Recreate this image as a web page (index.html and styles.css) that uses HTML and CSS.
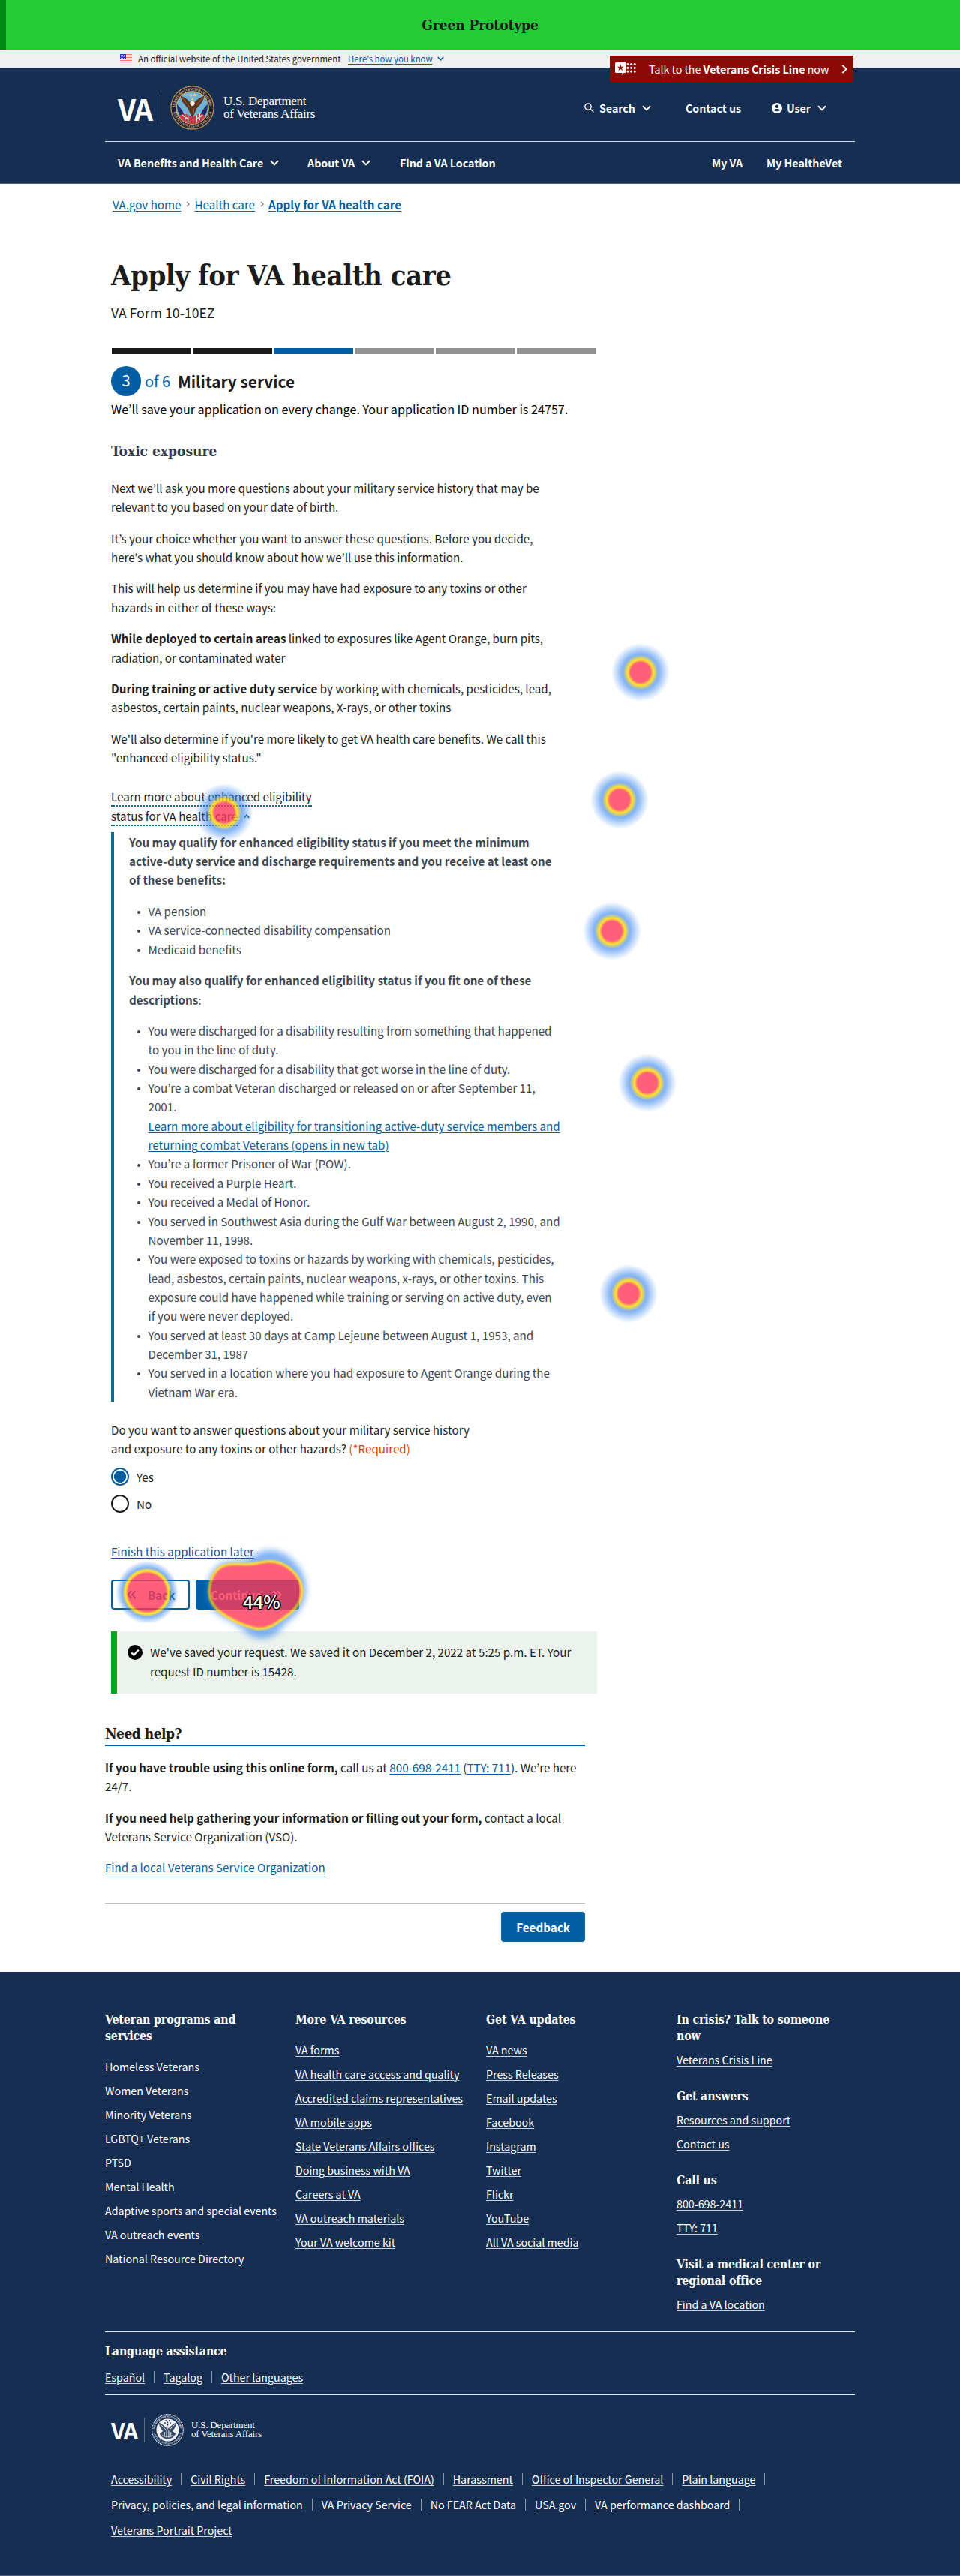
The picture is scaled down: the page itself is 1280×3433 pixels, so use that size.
FILE: index.html
```html
<!DOCTYPE html>
<html lang="en">
<head>
<meta charset="utf-8">
<title>Apply for VA health care</title>
<link rel="stylesheet" href="styles.css">
</head>
<body>
<svg class="defs" width="0" height="0" aria-hidden="true">
  <defs>
    <symbol id="down" viewBox="0 0 12 8"><path d="M1 1.2 6 6.4 11 1.2" fill="none" stroke="currentColor" stroke-width="2"/></symbol>
    <symbol id="right" viewBox="0 0 8 12"><path d="M1.5 1 6.5 6 1.5 11" fill="none" stroke="currentColor" stroke-width="2"/></symbol>
    <symbol id="double" viewBox="0 0 13 12"><path d="M1.5 1 6 6 1.5 11M7 1l4.500 5L7 11" fill="none" stroke="currentColor" stroke-width="2"/></symbol>
    <path id="ring-top" d="M6.500 30a23.500 23.500 0 0 1 47 0"/>
    <path id="ring-bottom" d="M3.200 30a26.800 26.800 0 0 0 53.600 0"/>
  </defs>
</svg>

<div class="proto">Green Prototype</div>
<div class="gov">
  <svg class="flag" width="16" height="12" viewBox="0 0 16 12"><path fill="#fff0ee" d="M0 0h16v12H0z"/><path stroke="#f5766a" stroke-width="1" d="M0 .5h16M0 2.500h16M0 4.500h16M0 6.500h16M0 8.500h16M0 10.500h16"/><path fill="#3232b4" d="M0 0h8v7H0z"/><path stroke="#b8b8f0" stroke-dasharray="1 1" d="M1 1.500h6M1.500 3.500h5M1 5.500h6"/></svg>
  <span class="gov-text">An official website of the United States government</span>
  <a class="gov-link">Here’s how you know</a>
  <svg class="gov-chev" width="9" height="6"><use href="#down"/></svg>
</div>

<header class="header">
  <div class="crisis">
    <svg width="29" height="18" viewBox="0 0 29 18"><path fill="#fff" d="M0 1.500Q0 0 1.500 0H14v14h-2.500L9.500 17.500V14h-8Q0 14 0 12.500z"/><path fill="#8b0a03" d="m7.200 2.600 1.100 3.200h3.300L9 7.800l1 3.300-2.800-2-2.800 2 1-3.300-2.600-2h3.300z"/><g stroke="#fff" stroke-width="3.200" stroke-linecap="round" stroke-dasharray="0 4.600"><path d="M17 2.500h10M17 7.300h10M17 12.100h10"/></g></svg>
    <span class="crisis-text">Talk to the <b>Veterans Crisis Line</b> now</span>
    <svg width="8" height="12"><use href="#right"/></svg>
  </div>
  <div class="head-in">
    <div class="head-top">
      <div class="va">VA</div>
      <div class="va-div"></div>
      <svg class="seal" width="59" height="59" viewBox="0 0 60 60">
        <circle cx="30" cy="30" r="29" fill="#1c1f3d" stroke="#a98a4e" stroke-width="1.500"/>
        <circle cx="30" cy="30" r="27.600" fill="none" stroke="#3a2130" stroke-width="1"/>
        <g font-family="Liberation Serif, serif" font-size="5" font-weight="bold" fill="#c9b277"><text textLength="70"><textPath href="#ring-top" startOffset="1">DEPARTMENT OF VETERANS AFFAIRS</textPath></text><text textLength="72"><textPath href="#ring-bottom" startOffset="6">UNITED STATES OF AMERICA</textPath></text></g>
        <circle cx="30" cy="30" r="22.200" fill="#6fb2d6" stroke="#c9a557" stroke-width="1.200"/>
        <path fill="#232b63" d="M9.500 25c3 5 7 7 9 14l3 8C13 43 8.500 36 9.500 25zM50.500 25c-3 5-7 7-9 14l-3 8c8.500-4 13-11 12-22z"/>
        <path fill="#c63a4b" d="M12 41c7-5 12-3 18 3 6-6 11-8 18-3-4 7-10 11-18 11S16 48 12 41z"/>
        <path stroke="#f3e9e4" stroke-width="1.300" fill="none" d="M20 37v10M24 40v10M36 40v10M40 37v10M16 40l8 5M44 40l-8 5"/>
        <path fill="#5b3420" d="M30 25c-4-2-6-8-16-11 1 8 5 11 10 17l3 7 3 6 3-6 3-7c5-6 9-9 10-17-10 3-12 9-16 11z"/>
        <path stroke="#8a5b3a" fill="none" d="M16 16c4 6 8 8 10 14M44 16c-4 6-8 8-10 14M28 31v7M32 31v7"/>
        <path fill="#f4ead8" d="M26.500 24c1-4 6-4 7 0l-2 3.500h-3z"/>
        <path fill="#e9cf66" d="m27 10 1 2 2-1-1 2 2 1h-2l-1 2-1-2h-2l2-1zM33 10l1 2h2l-2 1 1 2-2-1-2 1 1-2-2-1h2zM30 16l1 2h2l-2 1-1 2-1-2h-2l2-1z"/>
      </svg>
      <div class="dept">U.S. Department<br>of Veterans Affairs</div>
      <div class="tools">
        <span class="tool t-search"><svg class="i-search" width="13" height="13" viewBox="0 0 13 13" fill="none" stroke="#fff" stroke-width="1.300"><circle cx="5" cy="5" r="4.200"/><path d="m8 8 4.400 4.400"/></svg>Search<svg class="chev" width="12" height="8"><use href="#down"/></svg></span>
        <span class="tool t-contact">Contact us</span>
        <span class="tool"><svg class="i-user" width="14" height="14" viewBox="0 0 14 14"><circle cx="7" cy="7" r="7" fill="#fff"/><circle cx="7" cy="4.800" r="2.200" fill="#162e51"/><path fill="#162e51" d="M2.800 9.600C4 7.600 10 7.600 11.200 9.600 10 11.800 4 11.800 2.800 9.600z"/></svg>User<svg class="chev" width="12" height="8"><use href="#down"/></svg></span>
      </div>
    </div>
    <nav class="menu">
      <span class="m1">VA Benefits and Health Care<svg class="chev" width="12" height="8"><use href="#down"/></svg></span>
      <span class="m2">About VA<svg class="chev" width="12" height="8"><use href="#down"/></svg></span>
      <span>Find a VA Location</span>
      <span class="m4">My VA</span>
      <span class="m5">My HealtheVet</span>
    </nav>
  </div>
</header>

<main class="main">
  <nav class="crumbs"><a>VA.gov home</a><svg width="5" height="8" viewBox="0 0 8 12"><use href="#right"/></svg><a>Health care</a><svg width="5" height="8" viewBox="0 0 8 12"><use href="#right"/></svg><a><b>Apply for VA health care</b></a></nav>
  <h1>Apply for VA health care</h1>
  <p class="form-no">VA Form 10-10EZ</p>
  <div class="progress"><i class="done"></i><i class="done"></i><i class="now"></i><i></i><i></i><i></i></div>
  <div class="step"><span class="num">3</span><span class="of">of 6</span><b>Military service</b></div>
  <p class="save">We’ll save your application on every change. Your application ID number is 24757.</p>
  <h2 class="toxic">Toxic exposure</h2>
  <p>Next we’ll ask you more questions about your military service history that may be<br>relevant to you based on your date of birth.</p>
  <p>It’s your choice whether you want to answer these questions. Before you decide,<br>here’s what you should know about how we’ll use this information.</p>
  <p>This will help us determine if you may have had exposure to any toxins or other<br>hazards in either of these ways:</p>
  <p><b>While deployed to certain areas</b> linked to exposures like Agent Orange, burn pits,<br>radiation, or contaminated water</p>
  <p><b>During training or active duty service</b> by working with chemicals, pesticides, lead,<br>asbestos, certain paints, nuclear weapons, X-rays, or other toxins</p>
  <p>We'll also determine if you're more likely to get VA health care benefits. We call this<br>"enhanced eligibility status."</p>
  <div class="learn"><span>Learn more about enhanced eligibility<br>status for VA health care</span><svg width="8" height="6" viewBox="0 0 8 6"><path d="M.7 5 4 1.200 7.300 5" fill="none" stroke="#005ea2" stroke-width="1.500"/></svg></div>
  <div class="info">
    <p><b>You may qualify for enhanced eligibility status if you meet the minimum<br>active-duty service and discharge requirements and you receive at least one<br>of these benefits:</b></p>
    <ul>
      <li>VA pension</li>
      <li>VA service-connected disability compensation</li>
      <li>Medicaid benefits</li>
    </ul>
    <p><b>You may also qualify for enhanced eligibility status if you fit one of these<br>descriptions</b>:</p>
    <ul>
      <li>You were discharged for a disability resulting from something that happened<br>to you in the line of duty.</li>
      <li>You were discharged for a disability that got worse in the line of duty.</li>
      <li>You’re a combat Veteran discharged or released on or after September 11,<br>2001.<br><a>Learn more about eligibility for transitioning active-duty service members and<br>returning combat Veterans (opens in new tab)</a></li>
      <li>You’re a former Prisoner of War (POW).</li>
      <li>You received a Purple Heart.</li>
      <li>You received a Medal of Honor.</li>
      <li>You served in Southwest Asia during the Gulf War between August 2, 1990, and<br>November 11, 1998.</li>
      <li>You were exposed to toxins or hazards by working with chemicals, pesticides,<br>lead, asbestos, certain paints, nuclear weapons, x-rays, or other toxins. This<br>exposure could have happened while training or serving on active duty, even<br>if you were never deployed.</li>
      <li>You served at least 30 days at Camp Lejeune between August 1, 1953, and<br>December 31, 1987</li>
      <li>You served in a location where you had exposure to Agent Orange during the<br>Vietnam War era.</li>
    </ul>
  </div>
  <p class="question">Do you want to answer questions about your military service history<br>and exposure to any toxins or other hazards? <span class="req">(*Required)</span></p>
  <div class="radios">
    <label><i class="dot on"></i>Yes</label>
    <label><i class="dot"></i>No</label>
  </div>
  <a class="finish">Finish this application later</a>
  <div class="buttons">
    <button class="btn back"><svg width="13" height="12"><use href="#double" transform="rotate(180 6.500 6)"/></svg>Back</button>
    <button class="btn cont">Continue<svg width="13" height="12"><use href="#double"/></svg></button>
  </div>
  <div class="alert">
    <svg width="20" height="20" viewBox="0 0 20 20"><circle cx="10" cy="10" r="10"/><path d="m5.200 10.400 3.200 3.200 6.400-7" fill="none" stroke="#ecf3ec" stroke-width="2.400"/></svg>
    <span>We've saved your request. We saved it on December 2, 2022 at 5:25 p.m. ET. Your<br>request ID number is 15428.</span>
  </div>
  <section class="help">
    <h2>Need help?</h2>
    <p><b>If you have trouble using this online form,</b> call us at <a>800-698-2411</a> (<a>TTY: 711</a>). We’re here<br>24/7.</p>
    <p><b>If you need help gathering your information or filling out your form,</b> contact a local<br>Veterans Service Organization (VSO).</p>
    <p><a>Find a local Veterans Service Organization</a></p>
    <div class="fb"><button class="btn feedback">Feedback</button></div>
  </section>
</main>

<footer class="footer">
  <div class="foot-in">
    <div class="cols">
      <div>
        <h3>Veteran programs and<br>services</h3>
        <ul><li><a>Homeless Veterans</a></li><li><a>Women Veterans</a></li><li><a>Minority Veterans</a></li><li><a>LGBTQ+ Veterans</a></li><li><a>PTSD</a></li><li><a>Mental Health</a></li><li><a>Adaptive sports and special events</a></li><li><a>VA outreach events</a></li><li><a>National Resource Directory</a></li></ul>
      </div>
      <div>
        <h3>More VA resources</h3>
        <ul><li><a>VA forms</a></li><li><a>VA health care access and quality</a></li><li><a>Accredited claims representatives</a></li><li><a>VA mobile apps</a></li><li><a>State Veterans Affairs offices</a></li><li><a>Doing business with VA</a></li><li><a>Careers at VA</a></li><li><a>VA outreach materials</a></li><li><a>Your VA welcome kit</a></li></ul>
      </div>
      <div>
        <h3>Get VA updates</h3>
        <ul><li><a>VA news</a></li><li><a>Press Releases</a></li><li><a>Email updates</a></li><li><a>Facebook</a></li><li><a>Instagram</a></li><li><a>Twitter</a></li><li><a>Flickr</a></li><li><a>YouTube</a></li><li><a>All VA social media</a></li></ul>
      </div>
      <div class="contact">
        <h3>In crisis? Talk to someone<br>now</h3>
        <ul><li><a>Veterans Crisis Line</a></li></ul>
        <h3>Get answers</h3>
        <ul><li><a>Resources and support</a></li><li><a>Contact us</a></li></ul>
        <h3>Call us</h3>
        <ul><li><a>800-698-2411</a></li><li><a>TTY: 711</a></li></ul>
        <h3>Visit a medical center or<br>regional office</h3>
        <ul><li><a>Find a VA location</a></li></ul>
      </div>
    </div>
    <div class="lang">
      <h3>Language assistance</h3>
      <div class="row"><a>Español</a><i></i><a>Tagalog</a><i></i><a>Other languages</a></div>
    </div>
    <div class="foot-logo">
      <div class="va small">VA</div>
      <div class="va-div"></div>
      <svg class="seal" width="43" height="43" viewBox="0 0 60 60">
        <circle cx="30" cy="30" r="29" fill="none" stroke="#e6eaf0" stroke-width="1.600" stroke-dasharray="2 .8"/>
        <g font-family="Liberation Serif, serif" font-size="5.200" font-weight="bold" fill="#d5dbe4"><text textLength="70"><textPath href="#ring-top" startOffset="1">DEPARTMENT OF VETERANS AFFAIRS</textPath></text><text textLength="72"><textPath href="#ring-bottom" startOffset="6">UNITED STATES OF AMERICA</textPath></text></g>
        <circle cx="30" cy="30" r="21" fill="#f2f4f7"/>
        <path fill="#3a4d6b" d="M14 16c8 4 11 8 16 12 5-4 8-8 16-12 0 7-3 11-7 16l6 5c-3 6-9 10-15 10s-12-4-15-10l6-5c-4-5-7-9-7-16z"/>
        <path fill="none" stroke="#f2f4f7" stroke-width="1.300" d="M17 20l10 10M43 20 33 30M24 34v9M28 31v13M32 31v13M36 34v9M20 40c6 3 14 3 20 0"/>
        <g fill="#162e51"><circle cx="27" cy="12.500" r="1.200"/><circle cx="33" cy="12.500" r="1.200"/><circle cx="25" cy="17" r="1.200"/><circle cx="30" cy="16" r="1.200"/><circle cx="35" cy="17" r="1.200"/><circle cx="30" cy="20.500" r="1.200"/></g>
      </svg>
      <div class="dept">U.S. Department<br>of Veterans Affairs</div>
    </div>
    <div class="legal">
      <div class="row"><a>Accessibility</a><i></i><a>Civil Rights</a><i></i><a>Freedom of Information Act (FOIA)</a><i></i><a>Harassment</a><i></i><a>Office of Inspector General</a><i></i><a>Plain language</a><i></i></div>
      <div class="row"><a>Privacy, policies, and legal information</a><i></i><a>VA Privacy Service</a><i></i><a>No FEAR Act Data</a><i></i><a>USA.gov</a><i></i><a>VA performance dashboard</a><i></i></div>
      <div class="row"><a>Veterans Portrait Project</a></div>
    </div>
  </div>
</footer>

<!-- Click heat map -->
<div class="heat">
  <i class="spot" style="left:299px;top:1083px"></i>
  <i class="spot" style="left:854px;top:896px"></i>
  <i class="spot" style="left:826px;top:1066px"></i>
  <i class="spot" style="left:816px;top:1241px"></i>
  <i class="spot" style="left:863px;top:1443px"></i>
  <i class="spot" style="left:838px;top:1724px"></i>
  <i class="spot big" style="left:196px;top:2122px"></i>
  <svg class="blob" width="170" height="150" viewBox="260 2050 170 150">
    <defs>
      <filter id="b1" x="-20%" y="-20%" width="140%" height="140%"><feGaussianBlur stdDeviation="4"/></filter>
      <filter id="b2"><feGaussianBlur stdDeviation="1.200"/></filter>
      <filter id="b3"><feGaussianBlur stdDeviation="1"/></filter>
      <path id="blob-core" d="M281 2121C281 2104 290 2089 303 2087C314 2085 322 2087 334 2086C346 2085 354 2081 366 2083C387 2087 401 2105 401 2120C401 2140 384 2150 370 2160C358 2169 345 2171 333 2166C322 2163 310 2157 301 2151C289 2144 281 2134 281 2121Z"/>
    </defs>
    <g opacity=".8">
      <path filter="url(#b1)" fill="#2d7fee" opacity=".75" d="M276 2122C276 2101 288 2082 304 2081C322 2081 334 2078 342 2071C352 2063 373 2065 386 2075C400 2086 410 2103 408 2122C406 2143 392 2155 378 2166C370 2182 348 2189 333 2179C324 2172 314 2163 303 2158C284 2149 276 2138 276 2122Z"/>
      <use href="#blob-core" filter="url(#b2)" fill="#ffd400" stroke="#ffd400" stroke-width="7"/>
      <use href="#blob-core" filter="url(#b3)" fill="#ff3758"/>
    </g>
  </svg>
  <span class="pct">44%</span>
</div>
</body>
</html>
```

FILE: styles.css
```css
* { box-sizing: border-box; }
body {
  position: relative;
  margin: 0;
  width: 1280px;
  height: 3433px;
  overflow: hidden;
  background: #fff;
  color: #1b1b1b;
  font: 15.16px/25.34px "Noto Sans CJK KR", sans-serif;
  white-space: nowrap;
}
h1, h2, h3, p, ul { margin: 0; padding: 0; }
h1, h2, h3, .proto {
  font-family: "DejaVu Serif Condensed", "DejaVu Serif", serif;
  font-stretch: condensed;
  font-weight: 700;
}
ul { list-style: none; }
svg { display: block; flex: none; }
i { display: block; font-style: normal; }
a { color: #005ea2; text-decoration: underline; text-decoration-thickness: 1px; text-underline-offset: 2px; }
.defs { position: absolute; }

.proto {
  height: 66px;
  border-left: 8px solid #008817;
  padding-right: 8px;
  background: #23cb35;
  text-align: center;
  font-size: 19px;
  line-height: 66px;
  letter-spacing: -.1px;
}
.gov {
  display: flex;
  align-items: center;
  height: 24px;
  padding-left: 160px;
  background: #f0f0f0;
  font-size: 11.42px;
  line-height: 24px;
}
.gov-text { margin-left: 8px; width: 280px; }
.gov-link { width: 119px; }
.gov-chev { color: #005ea2; }

.header {
  position: relative;
  height: 155px;
  background: #162e51;
  border-bottom: 1px solid #4c5f7d;
  color: #fff;
  font-weight: 700;
  font-size: 14.25px;
}
.crisis {
  position: absolute;
  left: 813px;
  top: -16px;
  width: 325px;
  height: 36px;
  display: flex;
  align-items: center;
  padding-left: 7px;
  background: #8b0a03;
  border-radius: 0 0 4px 4px;
  font-weight: 400;
}
.crisis-text { width: 273px; padding-left: 16px; }
.head-in { width: 1000px; margin-left: 140px; }
.head-top {
  display: flex;
  align-items: center;
  height: 99px;
  padding: 9px 0 0 17px;
  border-bottom: 1px solid #d4d8de;
}
.va { width: 57px; font-weight: 700; font-size: 39px; line-height: 44px; letter-spacing: -1.500px; }
.va-div { width: 1px; height: 43px; background: #8693a8; }
.seal { margin-left: 12px; }
.dept { margin-left: 12px; font: 400 17px/16.500px "Liberation Serif", serif; letter-spacing: -.3px; }
.tools { display: flex; margin-left: auto; padding-right: 38px; }
.tool { display: flex; align-items: center; }
.t-search { width: 135px; }
.t-contact { width: 115px; }
.i-search { margin-right: 7px; }
.i-user { margin-right: 6px; }
.chev { margin-left: 9px; }
.menu { display: flex; align-items: center; height: 56px; padding: 0 17px 0 17px; }
.menu span { display: flex; align-items: center; }
.m1 { width: 253px; }
.m2 { width: 123px; }
.m4 { margin-left: auto; width: 73px; }

.main { width: 648px; margin-left: 148px; padding-top: 14.400px; }
.main > p + p { margin-top: 16.200px; }
.crumbs { display: flex; align-items: center; height: 26px; padding-left: 2px; }
.crumbs svg { margin: 0 6px 0 7px; color: #757575; }
h1 { margin-top: 59.900px; font-size: 38px; line-height: 44px; letter-spacing: -.5px; }
.form-no { margin-top: 13.700px; font-size: 17.700px; line-height: 26px; }
.progress { display: flex; gap: 2px; margin: 35px 0 0 1px; }
.progress i { width: 106px; height: 8px; background: #919191; }
.progress .done { background: #1b1b1b; }
.progress .now { background: #005ea2; }
.step { display: flex; align-items: center; height: 40px; margin-top: 15.700px; font-size: 20px; line-height: 38px; }
.step b { font-size: 20.800px; }
.num { width: 40px; height: 40px; border-radius: 50%; background: #005ea2; color: #fff; text-align: center; }
.of { width: 44px; margin-left: 5px; color: #005ea2; }
.save { margin-top: 4.300px; font-size: 16.150px; line-height: 26px; color: #000; }
.toxic { margin: 30.700px 0 25px; font-size: 19px; line-height: 24px; color: #323a45; }
.learn { width: 300px; margin-top: 25px; line-height: 26px; }
.learn span { border-bottom: 2px dotted #046b99; padding-bottom: 1px; }
.learn svg { display: inline-block; margin-left: 8px; vertical-align: 3px; }
.info { height: 759px; margin-top: 9.300px; padding: .75px 0 0 20px; border-left: 4px solid #046b99; color: #3d4551; }
.info ul { margin: 16.100px 0 16.400px; }
.info li { position: relative; padding-left: 25.500px; }
.info li::before { content: ""; position: absolute; left: 10.500px; top: 12.200px; width: 4px; height: 4px; border-radius: 50%; background: #3d4551; }
.question { margin-top: 25px; }
.req { color: #d54309; }
.radios { display: grid; gap: 12px; margin-top: 12px; }
.radios label { display: flex; align-items: center; gap: 10px; height: 24px; line-height: 22px; }
.dot { width: 24px; height: 24px; border: 2px solid #1b1b1b; border-radius: 50%; }
.dot.on { border-color: #005ea2; background: radial-gradient(circle, #005ea2 7.600px, #fff 8.400px); }
.finish { display: block; margin-top: 39px; color: #1f4a8c; }
.buttons { display: flex; gap: 8px; margin-top: 25px; }
.btn { display: flex; align-items: center; height: 40px; margin: 0; padding: 0; border: 0; border-radius: 4px; background: #005ea2; color: #fff; font: 700 15.160px/38px "Noto Sans CJK KR", sans-serif; }
.back { width: 105px; padding-left: 19px; gap: 15px; border: 2px solid #005ea2; background: #fff; color: #005ea2; }
.cont { width: 138px; padding-left: 20px; gap: 14px; }
.alert { display: flex; height: 83px; margin-top: 29px; padding: 15.400px 0 0 14px; border-left: 8px solid #00a91c; background: #ecf3ec; }
.alert svg { margin: 2.500px 10px 0 0; }
.help { width: 640px; margin: 41px 0 0 -8px; }
.help h2 { padding-bottom: 3px; border-bottom: 2px solid #005ea2; font-size: 19px; line-height: 24px; letter-spacing: -.5px; }
.help p { margin-top: 15.900px; }
.fb { display: flex; justify-content: flex-end; margin-top: 34.600px; padding-top: 11px; border-top: 1px solid #bcbcbc; }
.feedback { width: 112px; justify-content: center; }

.footer { height: 805px; margin-top: 39.500px; padding-top: 53.500px; background: #162e51; color: #fff; font-size: 14.260px; line-height: 32px; border-bottom: 1px solid #4c5f7d; }
.footer a { color: #fff; text-decoration-color: #c9d0da; }
.foot-in { width: 1000px; margin-left: 140px; }
.footer h3 { font-size: 15.800px; line-height: 22px; letter-spacing: -.15px; }
.cols { display: grid; grid-template-columns: repeat(4, 254px); height: 425.500px; }
.cols ul { margin-top: 12.600px; }
.cols .contact ul { margin: 4.300px 0 21.600px; }
.lang { height: 85px; padding-top: 15.500px; border: solid #e6eaf0; border-width: 1px 0; }
.lang .row { margin-top: 7px; }
.row { display: flex; align-items: center; }
.row i { width: 1px; height: 16px; margin: 0 12px; background: #8a97aa; }
.foot-logo { display: flex; align-items: center; height: 43px; margin: 25px 0 0 8px; }
.va.small { width: 44px; font-size: 30px; letter-spacing: -1.200px; line-height: 40px; }
.foot-logo .va-div { height: 33px; background: #5c6c86; }
.foot-logo .seal { margin-left: 9px; }
.foot-logo .dept { margin-left: 10px; font-size: 13px; line-height: 12.500px; letter-spacing: -.2px; }
.legal { margin: 27.800px 0 0 8px; line-height: 34px; }

.heat { position: absolute; left: 0; top: 0; }
.spot {
  position: absolute;
  width: 78px;
  height: 78px;
  margin: -39px 0 0 -39px;
  border-radius: 50%;
  background: radial-gradient(circle closest-side, rgba(255,55,88,.8) 0 34%, rgba(255,212,0,.8) 43% 45%, rgba(45,127,238,.6) 60%, rgba(45,127,238,.5) 68%, rgba(45,127,238,.24) 84%, rgba(45,127,238,0));
}
.spot.big {
  width: 84px;
  height: 84px;
  margin: -42px 0 0 -42px;
  background: radial-gradient(circle closest-side, rgba(255,55,88,.8) 0 60%, rgba(255,212,0,.8) 67% 70%, rgba(45,127,238,.6) 78%, rgba(45,127,238,0));
}
.blob { position: absolute; left: 260px; top: 2050px; }
.pct {
  position: absolute;
  left: 324px;
  top: 2118px;
  color: #fff;
  font-size: 24px;
  font-weight: 500;
  line-height: 32px;
  text-shadow: 1px 1px #000, -1px -1px #000, 1px -1px #000, -1px 1px #000, 0 1.500px #000, 1.500px 0 #000, -1.500px 0 #000;
}
```
